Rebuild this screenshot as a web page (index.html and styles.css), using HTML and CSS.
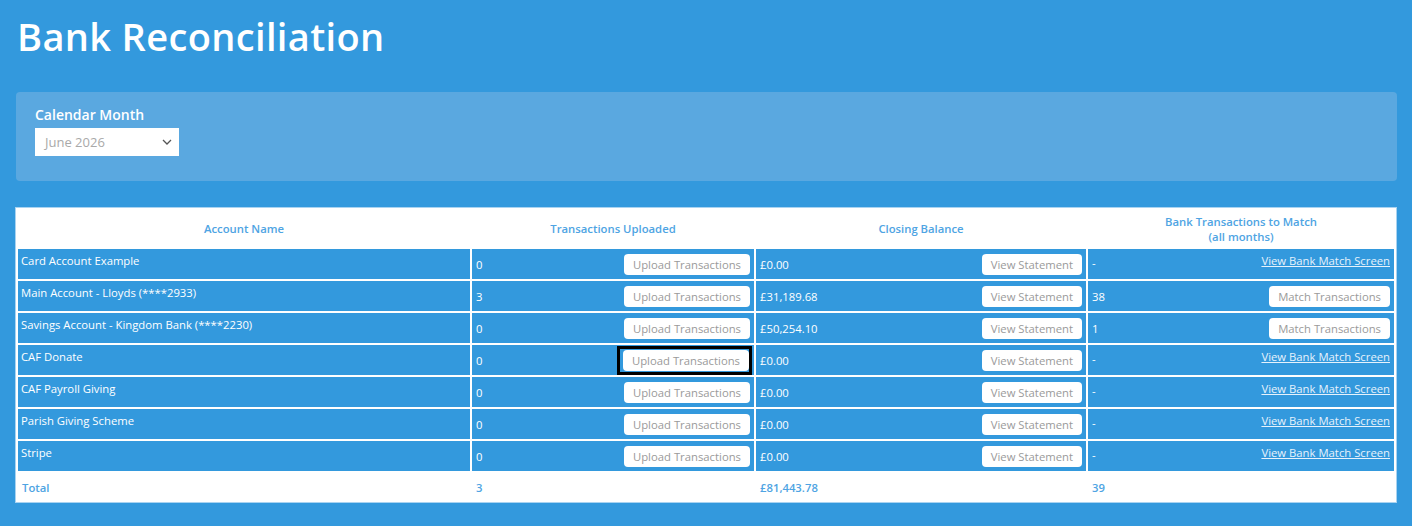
FILE: index.html
```html
<!DOCTYPE html>
<html>
<head>
<meta charset="utf-8">
<link rel="stylesheet" href="styles.css">
</head>
<body>
<div class="page">
  <h1 class="title">Bank Reconciliation</h1>
  <div class="filter-panel">
    <label class="filter-label">Calendar Month</label>
    <div class="select">
      <span class="select-text">June 2026</span>
      <svg class="chev" width="10" height="6" viewBox="0 0 10 6"><path d="M1 1 L5 5 L9 1" fill="none" stroke="#555" stroke-width="1.3"/></svg>
    </div>
  </div>
  <table class="recon">
    <colgroup>
      <col class="c1"><col class="c2"><col class="c3"><col class="c4">
    </colgroup>
    <thead>
      <tr>
        <th>Account Name</th>
        <th>Transactions Uploaded</th>
        <th>Closing Balance</th>
        <th>Bank Transactions to Match<br>(all months)</th>
      </tr>
    </thead>
    <tbody>
      <tr>
        <td class="name">Card Account Example</td>
        <td><div class="split"><span>0</span><button class="btn">Upload Transactions</button></div></td>
        <td><div class="split"><span>£0.00</span><button class="btn">View Statement</button></div></td>
        <td class="top"><div class="split"><span class="dash">-</span><a class="link" href="#">View Bank Match Screen</a></div></td>
      </tr>
      <tr>
        <td class="name">Main Account - Lloyds (****2933)</td>
        <td><div class="split"><span>3</span><button class="btn">Upload Transactions</button></div></td>
        <td><div class="split"><span>£31,189.68</span><button class="btn">View Statement</button></div></td>
        <td><div class="split"><span>38</span><button class="btn">Match Transactions</button></div></td>
      </tr>
      <tr>
        <td class="name">Savings Account - Kingdom Bank (****2230)</td>
        <td><div class="split"><span>0</span><button class="btn">Upload Transactions</button></div></td>
        <td><div class="split"><span>£50,254.10</span><button class="btn">View Statement</button></div></td>
        <td><div class="split"><span>1</span><button class="btn">Match Transactions</button></div></td>
      </tr>
      <tr>
        <td class="name">CAF Donate</td>
        <td><div class="split"><span>0</span><span class="focus-ring"><button class="btn">Upload Transactions</button></span></div></td>
        <td><div class="split"><span>£0.00</span><button class="btn">View Statement</button></div></td>
        <td class="top"><div class="split"><span class="dash">-</span><a class="link" href="#">View Bank Match Screen</a></div></td>
      </tr>
      <tr>
        <td class="name">CAF Payroll Giving</td>
        <td><div class="split"><span>0</span><button class="btn">Upload Transactions</button></div></td>
        <td><div class="split"><span>£0.00</span><button class="btn">View Statement</button></div></td>
        <td class="top"><div class="split"><span class="dash">-</span><a class="link" href="#">View Bank Match Screen</a></div></td>
      </tr>
      <tr>
        <td class="name">Parish Giving Scheme</td>
        <td><div class="split"><span>0</span><button class="btn">Upload Transactions</button></div></td>
        <td><div class="split"><span>£0.00</span><button class="btn">View Statement</button></div></td>
        <td class="top"><div class="split"><span class="dash">-</span><a class="link" href="#">View Bank Match Screen</a></div></td>
      </tr>
      <tr>
        <td class="name">Stripe</td>
        <td><div class="split"><span>0</span><button class="btn">Upload Transactions</button></div></td>
        <td><div class="split"><span>£0.00</span><button class="btn">View Statement</button></div></td>
        <td class="top"><div class="split"><span class="dash">-</span><a class="link" href="#">View Bank Match Screen</a></div></td>
      </tr>
    </tbody>
    <tfoot>
      <tr>
        <td>Total</td>
        <td>3</td>
        <td>£81,443.78</td>
        <td>39</td>
      </tr>
    </tfoot>
  </table>
</div>
</body>
</html>
```
FILE: styles.css
```css
html, body {
  margin: 0;
  padding: 0;
  background: #3399dd;
  font-family: "Open Sans", "Noto Sans", sans-serif;
}
.page {
  padding: 12px 15px 20px 16px;
}
.title {
  margin: 0 0 32px 1px;
  font-size: 38px;
  font-weight: 600;
  letter-spacing: 0.35px;
  color: #fff;
  line-height: 48px;
}
.filter-panel {
  background: #5aa8e0;
  border-radius: 4px;
  padding: 14px 19px 25px;
  margin-bottom: 26px;
}
.filter-label {
  display: block;
  color: #fff;
  font-weight: 600;
  font-size: 14px;
  line-height: 18px;
  margin-bottom: 4px;
}
.select {
  width: 144px;
  height: 28px;
  background: #fff;
  display: flex;
  align-items: center;
  justify-content: space-between;
  padding: 0 7px 0 10px;
  box-sizing: border-box;
}
.select-text {
  color: #a9a9a9;
  font-size: 13px;
}
.recon {
  background: #fff;
  border: 1px solid #a9d3f1;
  border-collapse: separate;
  border-spacing: 2px;
  font-size: 11.3px;
  color: #fff;
  margin: 0 -1px;
  width: calc(100% + 1px);
}
.c1 { width: 452px; }
.c2 { width: 282px; }
.c3 { width: 330px; }
.recon th {
  color: #4ea4e3;
  font-weight: 600;
  font-size: 11.3px;
  height: 33px;
  line-height: 15px;
  padding: 2px 4px;
}
.recon tbody td {
  background: #3399dd;
  height: 30px;
  padding: 0 4px;
  vertical-align: middle;
  box-sizing: border-box;
}
.recon tbody td.name {
  vertical-align: top;
  padding-top: 4px;
  padding-left: 3px;
}
.recon tbody td.top {
  vertical-align: top;
  padding-top: 4px;
}
.top .split {
  align-items: flex-start;
}
.top .dash { padding-top: 2px; }
.split {
  display: flex;
  justify-content: space-between;
  align-items: center;
}
.btn {
  font-family: "Open Sans", "Noto Sans", sans-serif;
  font-size: 11.3px;
  color: #9a9a9a;
  background: #fff;
  border: none;
  border-radius: 4px;
  height: 21px;
  padding: 0 9px;
  line-height: 21px;
  display: block;
}
.focus-ring {
  display: block;
  border: 3px solid #000;
  padding: 1px 0 1px 3px;
  margin: -4px -2px -4px 0;
}
.link {
  color: #e6f2fc;
  text-decoration: underline;
}
.recon tfoot td {
  color: #4ea4e3;
  font-weight: 600;
  height: 26px;
  padding: 1px 4px 0;
}
```
